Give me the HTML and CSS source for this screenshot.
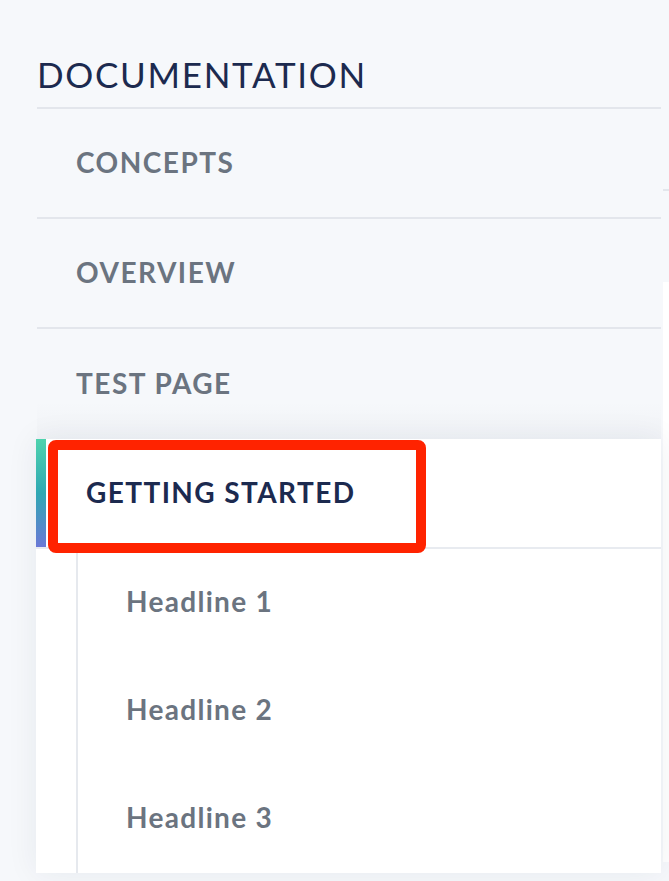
FILE: index.html
```html
<!DOCTYPE html>
<html lang="en">
<head>
<meta charset="utf-8">
<title>Documentation</title>
<link rel="stylesheet" href="styles.css">
</head>
<body>
<div class="page">
  <nav class="sidebar">
    <h1 class="title">DOCUMENTATION</h1>
    <ul class="nav">
      <li class="nav-item">CONCEPTS</li>
      <li class="nav-item">OVERVIEW</li>
      <li class="nav-item">TEST PAGE</li>
    </ul>
    <div class="active-panel">
      <div class="active-row">
        <span class="accent"></span>
        <span class="active-label">GETTING STARTED</span>
      </div>
      <ul class="sub">
        <li class="sub-item">Headline 1</li>
        <li class="sub-item">Headline 2</li>
        <li class="sub-item">Headline 3</li>
      </ul>
    </div>
    <div class="highlight"></div>
  </nav>
  <div class="side-strip">
    <div class="strip-card"></div>
  </div>
</div>
</body>
</html>
```
FILE: styles.css
```css
html, body {
  margin: 0;
  padding: 0;
  background: #f6f8fb;
  font-family: "Lato", "Open Sans", sans-serif;
}
.page {
  display: flex;
  height: 881px;
  overflow: hidden;
}
.sidebar {
  position: relative;
  width: 625px;
  margin-left: 36px;
  padding-top: 52px;
  flex: none;
}
.title {
  margin: 0 0 0 1px;
  font-weight: 400;
  font-size: 35px;
  line-height: 44px;
  color: #1c2a4f;
  letter-spacing: 1.7px;
  height: 55px;
  border-bottom: 2px solid #e3e6ec;
}
.nav {
  list-style: none;
  margin: 0;
  padding: 0;
}
.nav-item {
  height: 108px;
  box-sizing: border-box;
  padding-bottom: 2px;
  display: flex;
  align-items: center;
  padding-left: 39px;
  font-size: 28px;
  font-weight: 700;
  letter-spacing: 1.5px;
  color: #6b7480;
  border-bottom: 2px solid #e3e6ec;
  margin-left: 1px;
  height: 110px;
}
.nav-item:last-child {
  border-bottom: none;
  height: 110px;
  background: linear-gradient(to bottom, rgba(0,0,0,0) 65%, rgba(30,40,70,0.025) 100%);
}
.active-panel {
  background: #fff;
  box-shadow: 0 0 30px rgba(30, 40, 70, 0.07);
  height: 434px;
}
.active-row {
  display: flex;
  align-items: center;
  height: 108px;
  border-bottom: 2px solid #e8ebf0;
}
.accent {
  width: 10px;
  height: 100%;
  background: linear-gradient(to bottom, #4fd3ae, #2fa8b3 50%, #6b78d6);
  flex: none;
}
.active-label {
  padding-left: 40px;
  padding-bottom: 2px;
  font-size: 28px;
  font-weight: 700;
  letter-spacing: 1.4px;
  color: #1c2a4f;
}
.sub {
  list-style: none;
  margin: 0 0 0 40px;
  padding: 0;
  border-left: 2px solid #e6e9ee;
  height: 324px;
}
.sub-item {
  height: 108px;
  box-sizing: border-box;
  padding-bottom: 4px;
  display: flex;
  align-items: center;
  padding-left: 48px;
  font-size: 28px;
  font-weight: 700;
  letter-spacing: 1.3px;
  color: #6b7480;
}
.highlight {
  position: absolute;
  left: 12px;
  top: 440px;
  width: 358px;
  height: 93px;
  border: 10px solid #ff2300;
  border-radius: 8px;
}
.side-strip {
  flex: 1;
  margin-left: 2px;
  padding-top: 189px;
}
.strip-card {
  border-top: 2px solid #e3e6ec;
  height: 600px;
}
.strip-card::after {
  content: "";
  display: block;
  margin-top: 91px;
  height: 580px;
  background: #fff;
}
```
